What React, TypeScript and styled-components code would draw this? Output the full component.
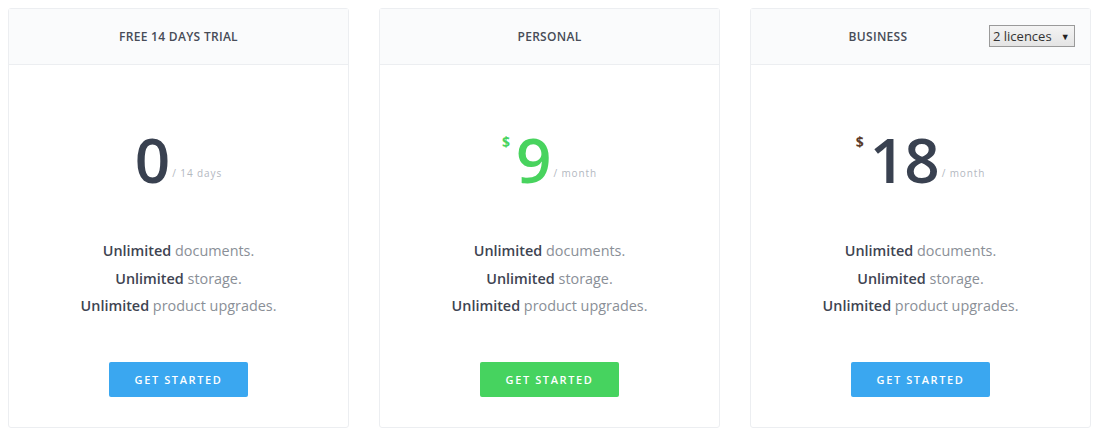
import React from "react";
import styled, { createGlobalStyle } from "styled-components";

const Global = createGlobalStyle`
  html, body { margin: 0; padding: 0; background: #fff; }
  body { font-family: "Open Sans", "Noto Sans", sans-serif; }
`;

const Row = styled.div`
  display: flex;
  gap: 30px;
  padding: 8px 0 0 8px;
  width: 1083px;
`;

const Card = styled.div`
  flex: 0 0 341px;
  height: 420px;
  box-sizing: border-box;
  border: 1px solid #eceef1;
  border-radius: 3px;
  display: flex;
  flex-direction: column;
  background: #fff;
`;

const Header = styled.div<{ $withSelect?: boolean }>`
  position: relative;
  height: 56px;
  box-sizing: border-box;
  padding-right: ${(p) => (p.$withSelect ? "85px" : "0")};
  background: #fafbfc;
  border-bottom: 1px solid #eceef1;
  display: flex;
  align-items: center;
  justify-content: center;
  font-size: 12px;
  font-weight: 600;
  color: #474c57;
  text-transform: uppercase;
  letter-spacing: 0.3px;
`;

const Select = styled.select`
  position: absolute;
  right: 15px;
  top: 16px;
  height: 22px;
  width: 86px;
  font-family: "Open Sans", sans-serif;
  font-size: 13px;
  color: #333;
  background: linear-gradient(#f4f4f4, #e4e4e4);
  border: 1px solid #9a9a9a;
  border-radius: 0;
  padding: 0 0 0 3px;
  appearance: none;
  outline: none;
`;

const Arrow = styled.span`
  position: absolute;
  right: 20px;
  top: 21px;
  font-size: 9px;
  color: #222;
  pointer-events: none;
`;

const Price = styled.div<{ $color: string }>`
  margin-top: 54px;
  height: 80px;
  display: flex;
  justify-content: center;
  align-items: flex-start;
  color: ${(p) => p.$color};
`;

const Currency = styled.span<{ $color?: string }>`
  font-size: 14px;
  font-weight: 700;
  margin-top: 13px;
  margin-right: 6px;
  color: ${(p) => p.$color || "inherit"};
`;

const Amount = styled.span`
  font-size: 62px;
  font-weight: 600;
  line-height: 80px;
  letter-spacing: -1px;
`;

const Period = styled.span`
  font-size: 10px;
  color: #b3b8bf;
  letter-spacing: 0.9px;
  align-self: flex-end;
  margin-bottom: 19px;
  margin-left: 3px;
`;

const Features = styled.ul`
  list-style: none;
  padding: 0;
  margin: 38px 0 0 0;
  text-align: center;
  font-size: 14.4px;
  color: #8a8f97;
`;

const Feature = styled.li`
  line-height: 27.5px;
  b { color: #3e4451; font-weight: 600; }
`;

const Button = styled.button<{ $bg: string }>`
  align-self: center;
  margin-top: 42px;
  width: 139px;
  height: 35px;
  border: none;
  border-radius: 2px;
  background: ${(p) => p.$bg};
  color: #fff;
  font-family: "Open Sans", sans-serif;
  font-size: 11px;
  font-weight: 600;
  letter-spacing: 1.6px;
  text-transform: uppercase;
  cursor: pointer;
`;

type Plan = {
  title: string;
  amount: string;
  currency?: boolean;
  period: string;
  color: string;
  curColor?: string;
  button: string;
  select?: boolean;
};

const plans: Plan[] = [
  { title: "Free 14 days trial", amount: "0", period: "/ 14 days", color: "#394150", button: "#3aa7f0" },
  { title: "Personal", amount: "9", currency: true, period: "/ month", color: "#48d35e", button: "#46d35f" },
  { title: "Business", amount: "18", currency: true, period: "/ month", color: "#394150", curColor: "#5a3b2a", button: "#3aa7f0", select: true },
];

export default function App() {
  return (
    <>
      <Global />
      <Row>
        {plans.map((p) => (
          <Card key={p.title}>
            <Header $withSelect={p.select}>
              {p.title}
              {p.select && (
                <>
                  <Select defaultValue="2">
                    <option value="1">1 licence</option>
                    <option value="2">2 licences</option>
                    <option value="5">5 licences</option>
                  </Select>
                  <Arrow>▼</Arrow>
                </>
              )}
            </Header>
            <Price $color={p.color}>
              {p.currency && <Currency $color={p.curColor}>$</Currency>}
              <Amount>{p.amount}</Amount>
              <Period>{p.period}</Period>
            </Price>
            <Features>
              <Feature><b>Unlimited</b> documents.</Feature>
              <Feature><b>Unlimited</b> storage.</Feature>
              <Feature><b>Unlimited</b> product upgrades.</Feature>
            </Features>
            <Button $bg={p.button}>Get started</Button>
          </Card>
        ))}
      </Row>
    </>
  );
}
